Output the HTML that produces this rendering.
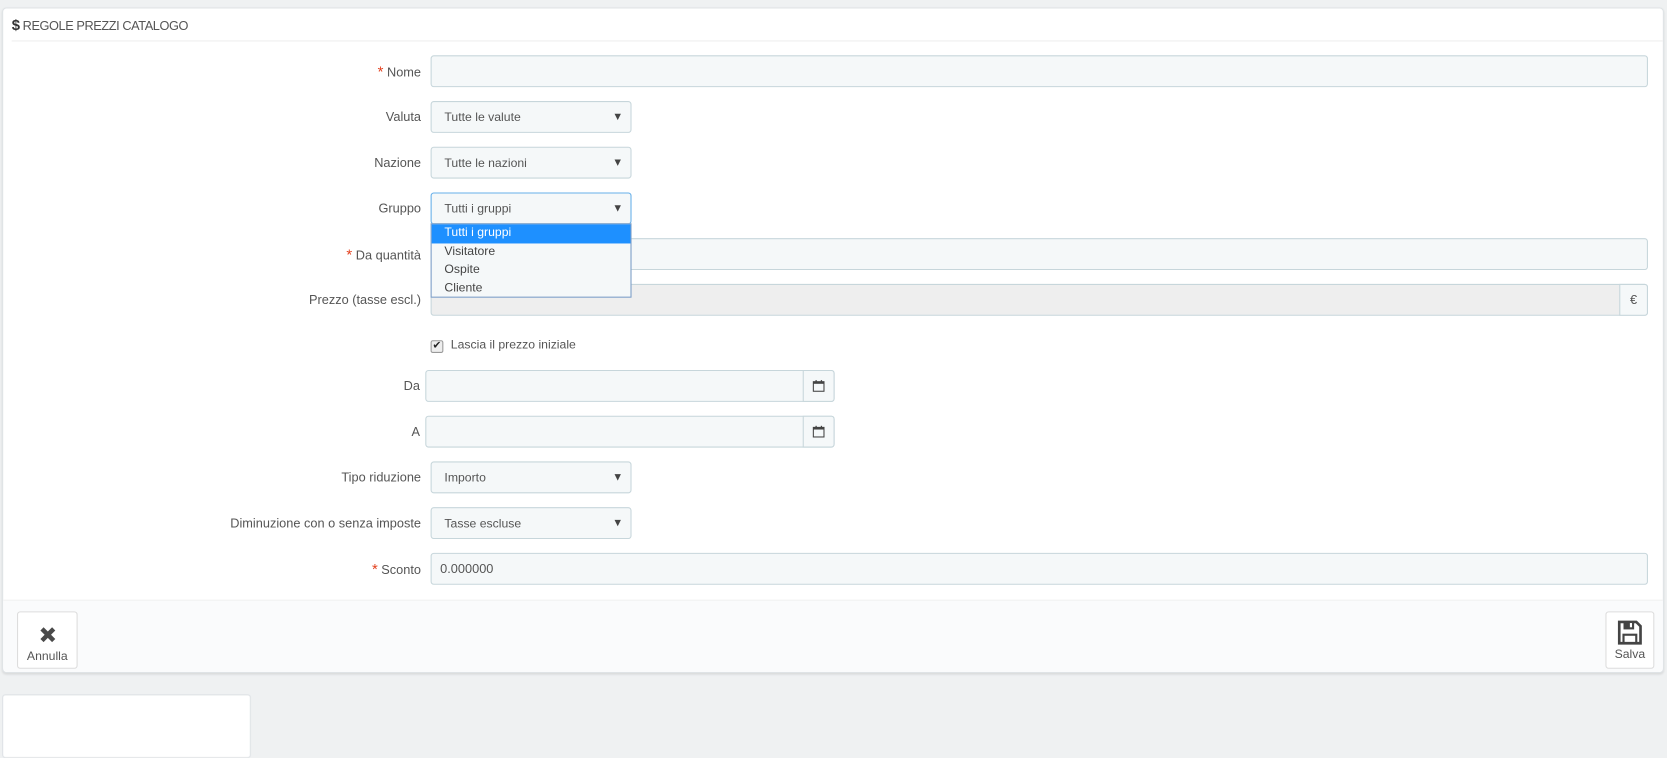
<!DOCTYPE html><html><head><meta charset="utf-8"><style>
*{box-sizing:border-box}
html,body{margin:0;width:1667px;height:701px;overflow:hidden;background:#eff1f2}
#w{position:absolute;left:0;top:0;width:1568px;height:660px;transform:scale(1.0632);transform-origin:0 0;font-family:"Liberation Sans",sans-serif;font-size:12px;color:#555}
.panel{position:absolute;left:2px;top:7px;width:1563px;height:626px;background:#fff;border:1px solid #dfe3e6;border-radius:4px;box-shadow:0 1px 2px rgba(0,0,0,.1)}
.hd{position:absolute;left:8px;top:0;right:0;height:31px;border-bottom:1px solid #eee;font-family:"Liberation Sans Narrow","Liberation Sans",sans-serif;font-size:12px;color:#555;line-height:30px;letter-spacing:-.4px}
.hd b{font-size:14px;color:#333}
.a{position:absolute}
.lbl{position:absolute;right:1172px;text-align:right;font-size:12px;color:#555;line-height:30px;white-space:nowrap}
.lbl i{color:#e3411f;font-style:normal;font-size:14px}
.in{position:absolute;left:405px;height:30px;background:#f5f8f9;border:1px solid #c7d6db;border-radius:3px}
.sel{width:189px;padding-left:12px;line-height:31px;font-size:11.5px;color:#555}
.sel:after{content:"";position:absolute;right:9px;top:11px;border-left:3px solid transparent;border-right:3px solid transparent;border-top:6px solid #444}
.foot{position:absolute;left:0;right:0;top:556px;bottom:0;background:#fafbfc;border-top:1px solid #eee;border-radius:0 0 4px 4px}
.btn{position:absolute;top:10px;height:54px;background:#fff;border:1px solid #ddd;border-radius:3px;text-align:center;font-size:11.5px;color:#555}
.add{position:absolute;top:-1px;bottom:-1px;border:1px solid #c7d6db;background:#f5f8f9;border-radius:0 3px 3px 0;text-align:center;line-height:28px}
</style></head><body><div id="w">
<div class="panel">
<div class="hd"><b>$</b> REGOLE PREZZI CATALOGO</div>
<div class="foot">
<div class="btn" style="left:13px;width:57px"><svg width="22" height="22" viewBox="0 0 22 22" style="margin-top:10px"><path d="M4 7l3-3 4 4 4-4 3 3-4 4 4 4-3 3-4-4-4 4-3-3 4-4z" fill="#4a4a4a"/></svg><div style="margin-top:1px">Annulla</div></div>
<div class="btn" style="left:1507px;width:46px"><svg width="24" height="24" viewBox="0 0 24 24" style="margin-top:7px"><path d="M2 2h16l4 4v16H2z" fill="none" stroke="#444" stroke-width="2.5"/><rect x="6" y="2" width="10" height="7" fill="#444"/><rect x="12" y="3" width="2" height="4" fill="#fff"/><rect x="6" y="14" width="12" height="8" fill="none" stroke="#444" stroke-width="2"/></svg><div>Salva</div></div>
</div>
</div>
<div class="a" style="left:2px;top:653px;width:234px;height:60px;background:#fff;border:1px solid #dfe3e6;border-radius:3px"></div>

<div class="lbl" style="top:52px"><i>*</i> Nome</div><div class="in" style="top:52px;width:1145px"></div>
<div class="lbl" style="top:95px">Valuta</div><div class="in sel" style="top:95px">Tutte le valute</div>
<div class="lbl" style="top:138px">Nazione</div><div class="in sel" style="top:138px">Tutte le nazioni</div>
<div class="lbl" style="top:224px"><i>*</i> Da quantità</div><div class="in" style="top:224px;width:1145px"></div>
<div class="lbl" style="top:267px">Prezzo (tasse escl.)</div><div class="in" style="top:267px;width:1145px;background:#eee"><div class="add" style="right:-1px;width:27px">€</div></div>
<div class="lbl" style="top:181px">Gruppo</div><div class="in sel" style="top:181px;border-color:#66afe9;background:#f5f8f9">Tutti i gruppi</div>
<div class="a" style="left:405px;top:210px;width:189px;height:70px;background:#f5f8f9;border:1px solid #7a9cc6;font-size:11.5px;color:#444;line-height:17px">
<div style="background:#1e90ff;color:#fff;padding-left:12px;height:18px">Tutti i gruppi</div>
<div style="padding-left:12px">Visitatore</div><div style="padding-left:12px">Ospite</div><div style="padding-left:12px">Cliente</div></div>
<div class="a" style="left:405px;top:320px;width:12px;height:12px;border:1px solid #999;border-radius:2px;background:#eee;font-size:10px;line-height:10px;text-align:center;color:#222">✔</div>
<div class="a" style="left:424px;top:319px;font-size:11.5px;color:#555">Lascia il prezzo iniziale</div>
<div class="lbl" style="top:348px;right:1173px">Da</div><div class="in" style="top:348px;left:400px;width:385px"><div class="add" style="right:-1px;width:30px"><svg width="12" height="12" viewBox="0 0 12 12" style="margin-top:8px"><rect x="1" y="2" width="10" height="9" fill="none" stroke="#444"/><rect x="1" y="2" width="10" height="2" fill="#444"/><rect x="3" y="0.5" width="1.2" height="3" fill="#444"/><rect x="8" y="0.5" width="1.2" height="3" fill="#444"/></svg></div></div>
<div class="lbl" style="top:391px;right:1173px">A</div><div class="in" style="top:391px;left:400px;width:385px"><div class="add" style="right:-1px;width:30px"><svg width="12" height="12" viewBox="0 0 12 12" style="margin-top:8px"><rect x="1" y="2" width="10" height="9" fill="none" stroke="#444"/><rect x="1" y="2" width="10" height="2" fill="#444"/><rect x="3" y="0.5" width="1.2" height="3" fill="#444"/><rect x="8" y="0.5" width="1.2" height="3" fill="#444"/></svg></div></div>
<div class="lbl" style="top:434px">Tipo riduzione</div><div class="in sel" style="top:434px">Importo</div>
<div class="lbl" style="top:477px">Diminuzione con o senza imposte</div><div class="in sel" style="top:477px">Tasse escluse</div>
<div class="lbl" style="top:520px"><i>*</i> Sconto</div><div class="in" style="top:520px;width:1145px;padding-left:8px;line-height:29px">0.000000</div>
</div></body></html>
